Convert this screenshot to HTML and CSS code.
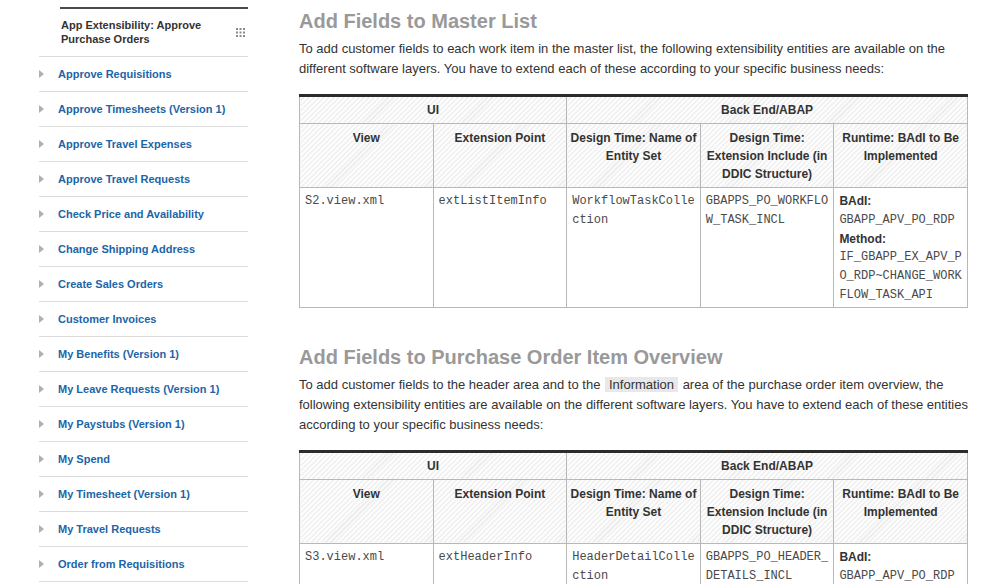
FILE: index.html
```html
<!DOCTYPE html>
<html>
<head>
<meta charset="utf-8">
<link rel="stylesheet" href="styles.css">
</head>
<body>
<div class="page">
  <aside class="sidebar">
    <div class="side-title">
      <span class="title-text">App Extensibility: Approve Purchase Orders</span>
      <svg class="grid-icon" width="9" height="9" viewBox="0 0 9 9">
        <rect x="0" y="0" width="2" height="2"/><rect x="3.5" y="0" width="2" height="2"/><rect x="7" y="0" width="2" height="2"/>
        <rect x="0" y="3.5" width="2" height="2"/><rect x="3.5" y="3.5" width="2" height="2"/><rect x="7" y="3.5" width="2" height="2"/>
        <rect x="0" y="7" width="2" height="2"/><rect x="3.5" y="7" width="2" height="2"/><rect x="7" y="7" width="2" height="2"/>
      </svg>
    </div>
    <ul class="nav">
      <li class="nav-item"><span class="arrow"></span><a class="nav-link">Approve Requisitions</a></li>
      <li class="nav-item"><span class="arrow"></span><a class="nav-link">Approve Timesheets (Version 1)</a></li>
      <li class="nav-item"><span class="arrow"></span><a class="nav-link">Approve Travel Expenses</a></li>
      <li class="nav-item"><span class="arrow"></span><a class="nav-link">Approve Travel Requests</a></li>
      <li class="nav-item"><span class="arrow"></span><a class="nav-link">Check Price and Availability</a></li>
      <li class="nav-item"><span class="arrow"></span><a class="nav-link">Change Shipping Address</a></li>
      <li class="nav-item"><span class="arrow"></span><a class="nav-link">Create Sales Orders</a></li>
      <li class="nav-item"><span class="arrow"></span><a class="nav-link">Customer Invoices</a></li>
      <li class="nav-item"><span class="arrow"></span><a class="nav-link">My Benefits (Version 1)</a></li>
      <li class="nav-item"><span class="arrow"></span><a class="nav-link">My Leave Requests (Version 1)</a></li>
      <li class="nav-item"><span class="arrow"></span><a class="nav-link">My Paystubs (Version 1)</a></li>
      <li class="nav-item"><span class="arrow"></span><a class="nav-link">My Spend</a></li>
      <li class="nav-item"><span class="arrow"></span><a class="nav-link">My Timesheet (Version 1)</a></li>
      <li class="nav-item"><span class="arrow"></span><a class="nav-link">My Travel Requests</a></li>
      <li class="nav-item"><span class="arrow"></span><a class="nav-link">Order from Requisitions</a></li>
      <li class="nav-item"><span class="arrow"></span><a class="nav-link">Shopping Cart</a></li>
    </ul>
  </aside>

  <main class="content">
    <h2 class="heading">Add Fields to Master List</h2>
    <p class="text">To add customer fields to each work item in the master list, the following extensibility entities are available on the different software layers. You have to extend each of these according to your specific business needs:</p>
    <table class="ext-table">
      <thead>
        <tr class="group-row">
          <th colspan="2">UI</th>
          <th colspan="3">Back End/ABAP</th>
        </tr>
        <tr class="col-row">
          <th>View</th>
          <th>Extension Point</th>
          <th>Design Time: Name of Entity Set</th>
          <th>Design Time: Extension Include (in DDIC Structure)</th>
          <th>Runtime: BAdI to Be Implemented</th>
        </tr>
      </thead>
      <tbody>
        <tr>
          <td><code class="mono">S2.view.xml</code></td>
          <td><code class="mono">extListItemInfo</code></td>
          <td><code class="mono">WorkflowTaskCollection</code></td>
          <td><code class="mono">GBAPPS_PO_WORKFLOW_TASK_INCL</code></td>
          <td><div class="lbl">BAdI:</div><code class="mono">GBAPP_APV_PO_RDP</code><div class="lbl">Method:</div><code class="mono">IF_GBAPP_EX_APV_PO_RDP~CHANGE_WORKFLOW_TASK_API</code></td>
        </tr>
      </tbody>
    </table>

    <h2 class="heading heading-2">Add Fields to Purchase Order Item Overview</h2>
    <p class="text">To add customer fields to the header area and to the <span class="ui-term">Information</span> area of the purchase order item overview, the following extensibility entities are available on the different software layers. You have to extend each of these entities according to your specific business needs:</p>
    <table class="ext-table">
      <thead>
        <tr class="group-row">
          <th colspan="2">UI</th>
          <th colspan="3">Back End/ABAP</th>
        </tr>
        <tr class="col-row">
          <th>View</th>
          <th>Extension Point</th>
          <th>Design Time: Name of Entity Set</th>
          <th>Design Time: Extension Include (in DDIC Structure)</th>
          <th>Runtime: BAdI to Be Implemented</th>
        </tr>
      </thead>
      <tbody>
        <tr>
          <td><code class="mono">S3.view.xml</code></td>
          <td><code class="mono">extHeaderInfo</code></td>
          <td><code class="mono">HeaderDetailCollection</code></td>
          <td><code class="mono">GBAPPS_PO_HEADER_DETAILS_INCL</code></td>
          <td><div class="lbl">BAdI:</div><code class="mono">GBAPP_APV_PO_RDP</code><div class="lbl">Method:</div><code class="mono">IF_GBAPP_EX_APV_PO_RDP~CHANGE_HEADER_DETAILS_API</code></td>
        </tr>
      </tbody>
    </table>
  </main>
</div>
</body>
</html>
```

FILE: styles.css
```css
* { box-sizing: border-box; }

html, body {
  margin: 0;
  padding: 0;
  background: #fff;
}

body {
  font-family: "Liberation Sans", Arial, sans-serif;
  color: #333;
}

.page {
  display: flex;
  align-items: flex-start;
  padding-left: 39px;
}

.sidebar {
  width: 209px;
  flex: 0 0 209px;
  padding-top: 7px;
}

.side-title {
  margin-left: 21px;
  border-top: 2px solid #4a4a4a;
  display: flex;
  align-items: center;
  justify-content: space-between;
  padding: 9px 3px 10px 1px;
}

.title-text {
  font-size: 11px;
  font-weight: bold;
  line-height: 14px;
  color: #333;
  width: 160px;
}

.grid-icon {
  fill: #8a8a8a;
  flex: 0 0 auto;
}

.nav {
  list-style: none;
  margin: 0;
  padding: 0;
  border-top: 1px solid #dcdcdc;
}

.nav-item {
  height: 35px;
  border-bottom: 1px solid #dcdcdc;
  display: flex;
  align-items: center;
}

.arrow {
  width: 0;
  height: 0;
  border-left: 5px solid #b0b0b0;
  border-top: 4px solid transparent;
  border-bottom: 4px solid transparent;
  margin-right: 14px;
}

.nav-link {
  font-size: 11px;
  font-weight: bold;
  color: #1c65a8;
  text-decoration: none;
}

.content {
  margin-left: 51px;
  width: 669px;
  flex: 0 0 669px;
}

.heading {
  margin: 10px 0 6px;
  font-size: 20px;
  line-height: 23px;
  font-weight: bold;
  color: #999;
}

.heading-2 {
  margin-top: 38px;
}

.text {
  margin: 0 0 15px;
  font-size: 13px;
  line-height: 20px;
  color: #333;
}

.ui-term {
  background: #e8e8e8;
  padding: 0 4px;
  margin: 0 1px;
}

.ext-table {
  width: 669px;
  table-layout: fixed;
  border-collapse: collapse;
  border-top: 3px solid #2b2b2b;
}

.ext-table th {
  font-size: 12px;
  font-weight: bold;
  line-height: 18px;
  color: #333;
  text-align: center;
  vertical-align: top;
  padding: 4px 2px;
  border: 1px solid #b8b8b8;
  background: repeating-linear-gradient(135deg, #ffffff 0px, #ffffff 2px, #ececec 2px, #ececec 3.5px);
}

.ext-table .group-row th {
  border-top: none;
}

.ext-table .col-row th {
  padding-top: 5px;
  padding-bottom: 4px;
}

.ext-table td {
  vertical-align: top;
  padding: 4px 5px 2px;
  border: 1px solid #b8b8b8;
  font-size: 12px;
  line-height: 18.8px;
  word-break: break-all;
}

.mono {
  display: block;
  font-family: "Liberation Mono", "Courier New", monospace;
  font-size: 12px;
  color: #4a4a4a;
}

.lbl {
  font-weight: bold;
  font-size: 12px;
  color: #333;
}
```
